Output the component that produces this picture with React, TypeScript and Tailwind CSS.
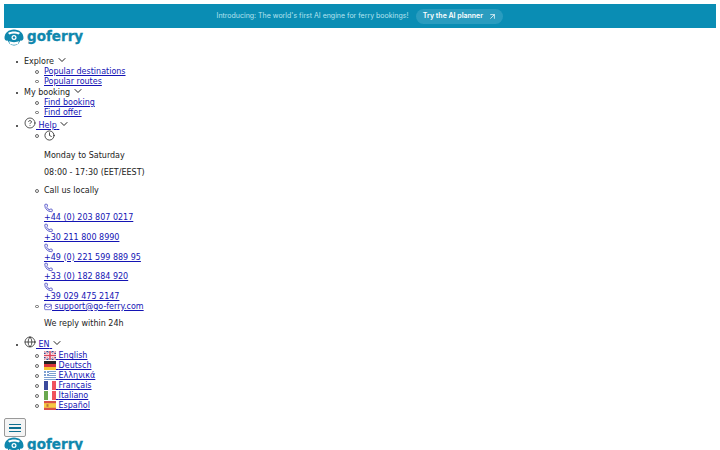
import { ChevronDown, CircleHelp, Clock, Phone, Mail, Globe, ArrowUpRight } from 'lucide-react';

const phones = ['+44 (0) 203 807 0217', '+30 211 800 8990', '+49 (0) 221 599 889 95', '+33 (0) 182 884 920', '+39 029 475 2147'];

function Logo() {
  return (
    <div className="flex items-center h-[18px] gap-[3px]">
      <svg width="20" height="17" viewBox="0 0 40 34" className="shrink-0">
        <path d="M1 18C1 8 9 1 20 1s19 7 19 17c0 4-3 6-7 5-2-6-6-9-12-9S10 17 8 23c-4 1-7-1-7-5z" fill="#0f87ad" />
        <circle cx="20" cy="20" r="13" fill="#0f87ad" />
        <path d="M8 8c6-4 18-4 24 0l-3 3c-5-3-13-3-18 0z" fill="#fff" />
        <circle cx="20" cy="17" r="5" fill="#fff" />
        <circle cx="20" cy="17" r="2.4" fill="#0f87ad" />
        <path d="M10 24c4 3 16 3 20 0l-2 6c-4 2-12 2-16 0z" fill="#fff" />
      </svg>
      <span className="font-['DejaVu_Sans'] font-bold text-[13.5px] leading-[18px] -mt-[2px] text-[#0f87ad] [-webkit-text-stroke:0.3px_#0f87ad]">goferry</span>
    </div>
  );
}

function Flag({ code }: { code: string }) {
  const cls = 'inline align-[2px] -my-[4px]';
  if (code === 'en') {
    return (
      <svg width="12" height="9" viewBox="0 0 12 9" className={cls}>
        <rect width="12" height="9" fill="#3b4a8c" />
        <path d="M0 0l12 9M12 0L0 9" stroke="#fff" strokeWidth="2" />
        <path d="M0 0l12 9M12 0L0 9" stroke="#d9485f" strokeWidth="0.7" />
        <path d="M6 0v9M0 4.5h12" stroke="#fff" strokeWidth="3" />
        <path d="M6 0v9M0 4.5h12" stroke="#d9485f" strokeWidth="1.6" />
      </svg>
    );
  }
  if (code === 'de') {
    return (
      <svg width="12" height="9" viewBox="0 0 12 9" className={cls}>
        <rect width="12" height="3" fill="#222" />
        <rect y="3" width="12" height="3" fill="#d8353a" />
        <rect y="6" width="12" height="3" fill="#f5c52e" />
      </svg>
    );
  }
  if (code === 'el') {
    return (
      <svg width="12" height="9" viewBox="0 0 12 9" className={cls}>
        <rect width="12" height="9" fill="#7d9fd0" />
        <path d="M0 1.5h12M0 3.5h12M0 5.5h12M0 7.5h12" stroke="#fff" strokeWidth="1" />
        <rect width="5" height="5" fill="#7d9fd0" />
        <path d="M2.5 0v5M0 2.5h5" stroke="#fff" strokeWidth="1" />
      </svg>
    );
  }
  if (code === 'fr' || code === 'it') {
    return (
      <svg width="12" height="9" viewBox="0 0 12 9" className={cls}>
        <rect width="4" height="9" fill={code === 'fr' ? '#3b4a9c' : '#6aa84f'} />
        <rect x="4" width="4" height="9" fill="#fff" />
        <rect x="8" width="4" height="9" fill="#f0525c" />
      </svg>
    );
  }
  return (
    <svg width="12" height="9" viewBox="0 0 12 9" className={cls}>
      <rect width="12" height="9" fill="#d8504a" />
      <rect y="2.2" width="12" height="4.6" fill="#f6c945" />
      <rect x="2.5" y="3.2" width="2" height="2.6" fill="#c0703a" />
    </svg>
  );
}

const langs = [
  { code: 'en', label: 'English' },
  { code: 'de', label: 'Deutsch' },
  { code: 'el', label: 'Ελληνικά' },
  { code: 'fr', label: 'Français' },
  { code: 'it', label: 'Italiano' },
  { code: 'es', label: 'Español' },
];

const link = 'text-[#1414b4] underline';
const chevron = 'inline align-[2px] -my-[4px] -ml-[1px]';
const bigIcon = 'inline align-[3px] -my-[4px] text-[#222]';
const dot = "relative before:content-[''] before:absolute before:left-[-8px] before:top-[4px] before:w-[2px] before:h-[2px] before:rounded-full before:bg-[#222]";
const ring = "relative before:content-[''] before:absolute before:left-[-9px] before:top-[3px] before:w-[3.5px] before:h-[3.5px] before:rounded-full before:border-[0.75px] before:border-[#666]";

export default function App() {
  return (
    <div className="p-[4px] pb-0 h-[450px] overflow-hidden bg-white font-['DejaVu_Sans',sans-serif] text-[8px] leading-[9.5px] text-[#222]">
      <div className="h-[24px] bg-[#0a8db4] flex items-center justify-center gap-[8px] font-['Inter',sans-serif]">
        <span className="text-[7px] text-[#b5e3f0]">Introducing: The world's first AI engine for ferry bookings!</span>
        <span className="h-[15px] w-[87px] rounded-full bg-[#2a9cbf] flex items-center justify-center gap-[5px] text-[7px] font-semibold text-white">
          Try the AI planner <ArrowUpRight size={9} strokeWidth={2} />
        </span>
      </div>

      <Logo />

      <ul className="list-none pl-[20px] mt-[11px]">
        <li className={dot}>
          Explore <ChevronDown size={12} className={chevron} />
          <ul className="list-none pl-[20px] mt-[0.5px]">
            <li className={ring}><a className={link}>Popular destinations</a></li>
            <li className={ring}><a className={link}>Popular routes</a></li>
          </ul>
        </li>
        <li className={`${dot} mt-[2px]`}>
          My booking <ChevronDown size={12} className={chevron} />
          <ul className="list-none pl-[20px] mt-[0.5px]">
            <li className={ring}><a className={link}>Find booking</a></li>
            <li className={ring}><a className={link}>Find offer</a></li>
          </ul>
        </li>
        <li className={`${dot} mt-[4px]`}>
          <a className={link}>
            <CircleHelp size={12} strokeWidth={1.5} className={bigIcon} /> Help{' '}
          </a>
          <ChevronDown size={12} className={chevron} />
          <ul className="list-none pl-[20px] mt-[0.5px]">
            <li className={ring}>
              <Clock size={11} strokeWidth={1.75} className="inline align-[1px] -my-[4px]" />
              <p className="mt-[10.5px]">Monday to Saturday</p>
              <p className="mt-[7.5px] mb-[8.5px]">08:00 - 17:30 (EET/EEST)</p>
            </li>
            <li className={ring}>
              Call us locally
              <div className="mt-[7.5px]">
                {phones.map(p => (
                  <a key={p} className={`${link} block leading-[9.75px]`}>
                    <Phone size={9} strokeWidth={1.75} className="block h-[10px]" />
                    {p}
                  </a>
                ))}
              </div>
            </li>
            <li className={ring}>
              <a className={link}>
                <Mail size={8} strokeWidth={1.75} className="inline align-[2px] -my-[4px]" /> support@go-ferry.com
              </a>
              <p className="mt-[7.5px] mb-[11.5px]">We reply within 24h</p>
            </li>
          </ul>
        </li>
        <li className={dot}>
          <a className={link}>
            <Globe size={12} strokeWidth={1.5} className={bigIcon} /> EN{' '}
          </a>
          <ChevronDown size={12} className={chevron} />
          <ul className="list-none pl-[20px] mt-[2px]">
            {langs.map(l => (
              <li key={l.code} className={`${ring} leading-[10px]`}>
                <a className={link}>
                  <Flag code={l.code} /> {l.label}
                </a>
              </li>
            ))}
          </ul>
        </li>
      </ul>

      <button className="flex mt-[7px] w-[22px] h-[19px] border border-[#999] rounded-[2px] bg-[#f4f4f4] flex-col items-center justify-center gap-[2px]">
        <span className="w-[12px] h-[1.5px] bg-[#0f6f90]" />
        <span className="w-[12px] h-[1.5px] bg-[#0f6f90]" />
        <span className="w-[12px] h-[1.5px] bg-[#0f6f90]" />
      </button>

      <div className="-mt-[1px]">
        <Logo />
      </div>
    </div>
  );
}
